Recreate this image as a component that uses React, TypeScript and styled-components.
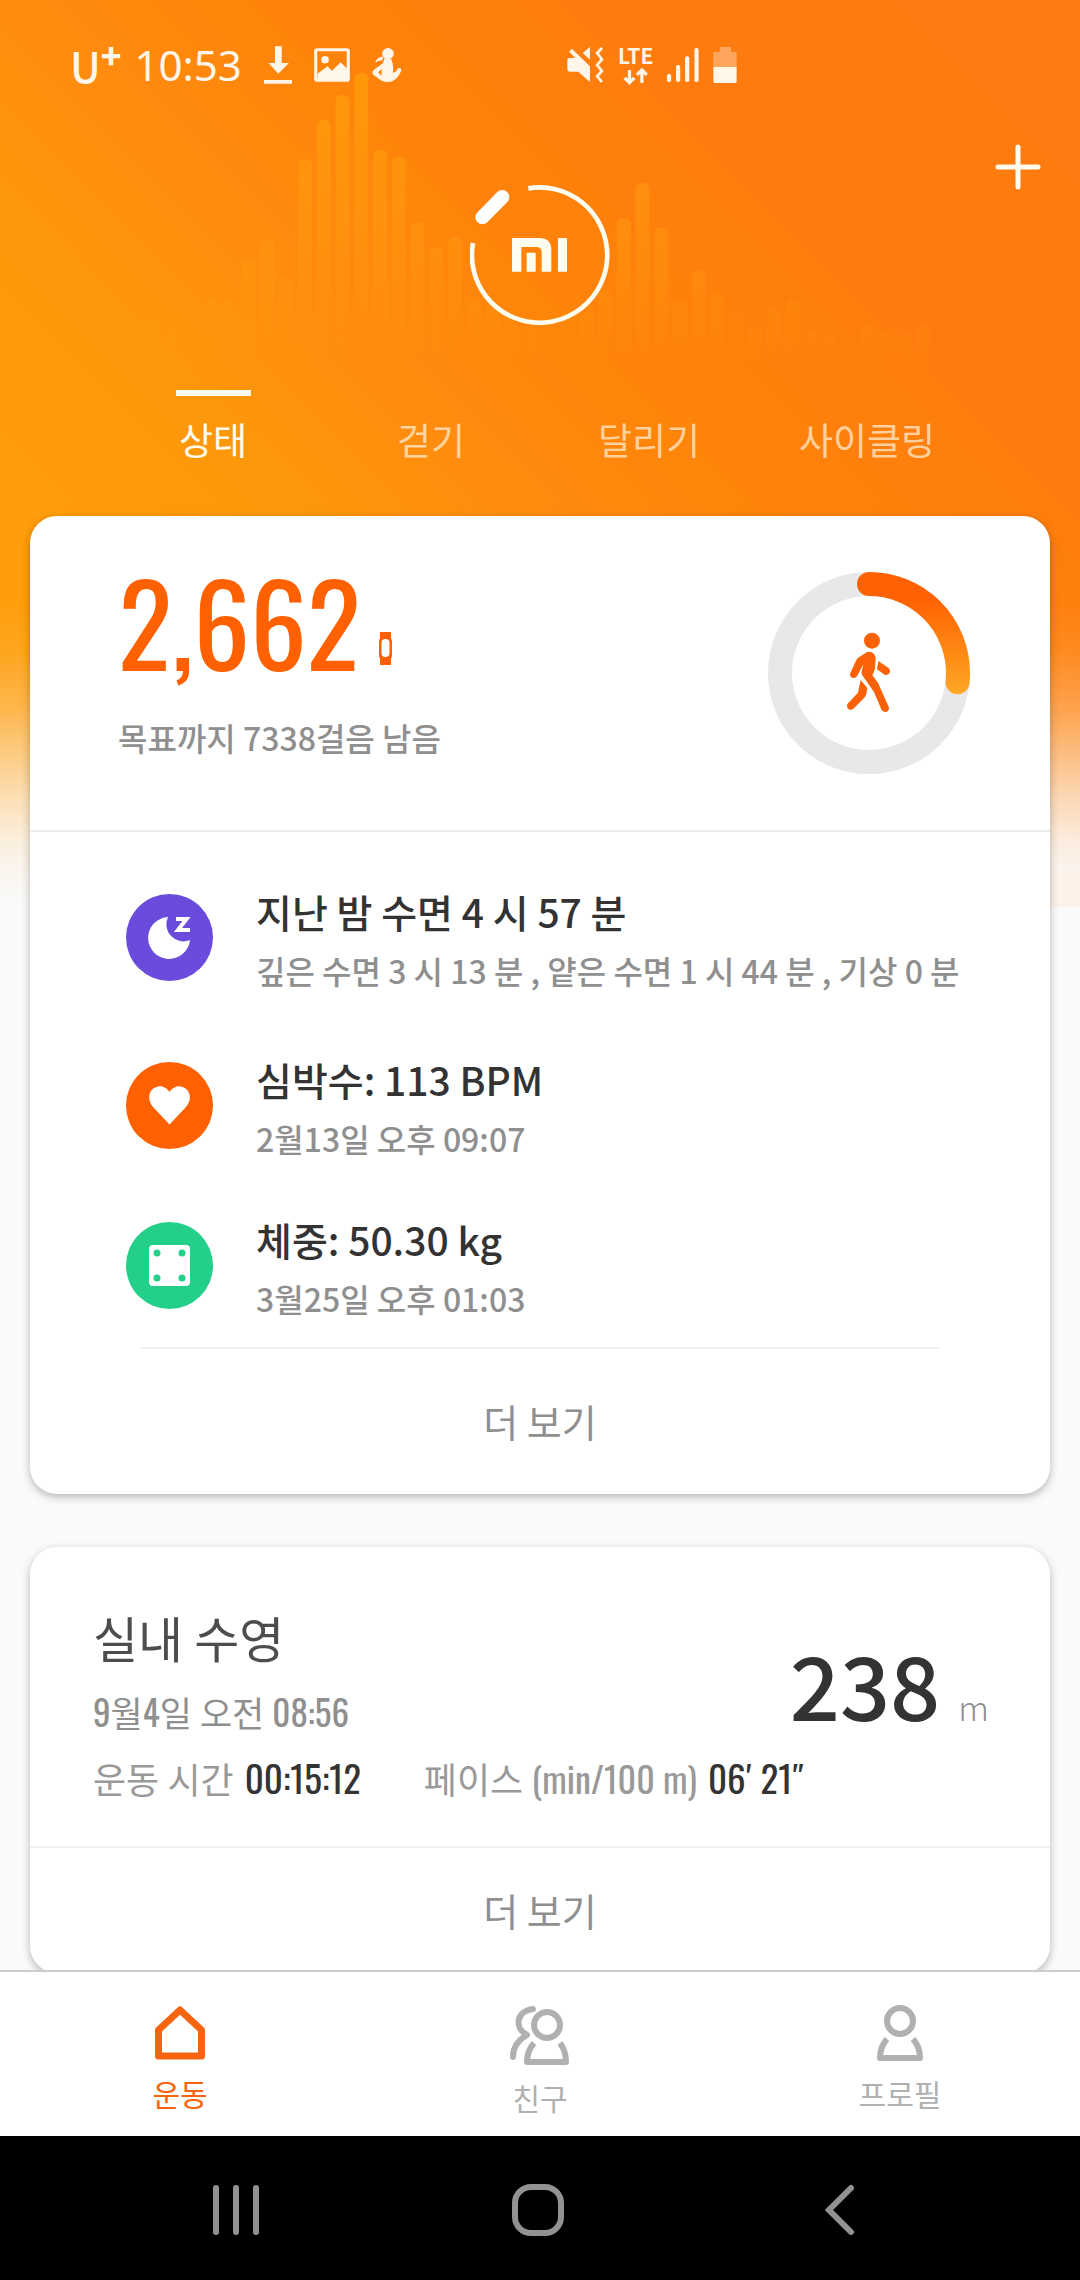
import React, { useState } from "react";
import styled, { createGlobalStyle } from "styled-components";

const sans = '"Noto Sans CJK KR", "Noto Sans", sans-serif';
const narrow = 'Oswald, "Roboto Condensed", "Liberation Sans Narrow", "Noto Sans CJK KR", sans-serif';

const GlobalStyle = createGlobalStyle`
  *, *::before, *::after { box-sizing: border-box; }
  body { margin: 0; background: #fafafa; }
  button { font: inherit; color: inherit; background: none; border: 0; padding: 0; cursor: pointer; }
  h1, h2, h3, p, ul { margin: 0; padding: 0; font-weight: inherit; font-size: inherit; }
  ul { list-style: none; }
  svg { display: block; flex: none; }
`;

const Screen = styled.div`
  height: 100vh;
  display: flex;
  flex-direction: column;
  font-family: ${sans};
  background: #fafafa;
`;

const Scroller = styled.div`
  flex: 1;
  min-height: 0;
  overflow: hidden auto;
  scrollbar-width: none;
  background:
    linear-gradient(#fdf1e8, #fdf1e8) right 871px / 30px 36px no-repeat,
    linear-gradient(180deg, rgba(250, 250, 250, 0) 600px, rgba(250, 250, 250, 0.08) 650px, rgba(250, 250, 250, 0.28) 710px, rgba(250, 250, 250, 0.5) 755px, rgba(250, 250, 250, 0.72) 800px, rgba(250, 250, 250, 0.88) 840px, rgba(250, 250, 250, 0.97) 880px, #fafafa 908px),
    linear-gradient(45deg, #ff9d0c 0%, #ff9d0a 22%, #fd970a 36%, #ff8b0f 47%, #ff840a 58%, #fe7c0e 76%, #fe7a12 100%) 0 0 / 100% 910px no-repeat,
    #fafafa;
`;

const Header = styled.header`
  position: relative;
  color: #fff;
  padding-bottom: 52px;
`;

const Spectrum = styled.svg`
  position: absolute;
  inset: 0 auto auto 0;
`;

const StatusBar = styled.div`
  position: relative;
  display: grid;
  grid-template-columns: 497px auto;
  justify-content: start;
  height: 130px;
  padding: 0 70px;
  color: #fff6ea;
`;

const StatusGroup = styled.div<{ $gap: number }>`
  display: flex;
  align-items: center;
  gap: ${(p) => p.$gap}px;
`;

const Carrier = styled.span`
  display: flex;
  align-items: center;
  font: 500 42px/58px ${sans};
  sup { font: 900 34px/38px ${sans}; align-self: flex-start; }
`;

const Clock = styled.time`
  font: 400 42px/60px "Noto Sans", sans-serif;
`;

const Network = styled.span`
  display: flex;
  flex-direction: column;
  align-items: center;
  gap: 4px;
  font: 700 21px/18px ${sans};
`;

const TitleBar = styled.div`
  position: relative;
  display: grid;
  grid-template-columns: 1fr auto 1fr;
  padding: 0 25px;
`;

const Brand = styled.h1`
  grid-column: 2;
  margin-top: 55px;
`;

const AddButton = styled.button`
  justify-self: end;
  align-self: start;
  height: 74px;
  padding: 0 14px;
`;

const Tabs = styled.nav`
  position: relative;
  display: grid;
  grid-template-columns: repeat(4, 1fr);
  margin: 65px 104px 0;
`;

const Tab = styled.button<{ $active: boolean }>`
  display: flex;
  flex-direction: column;
  align-items: center;
  gap: 18px;
  font-size: 37px;
  line-height: 50px;
  color: ${(p) => (p.$active ? "#fffdf0" : "rgba(255, 240, 215, 0.72)")};
  &::before {
    content: "";
    width: 75px;
    height: 6px;
    background: ${(p) => (p.$active ? "#fffdf0" : "transparent")};
  }
`;

const Cards = styled.main`
  position: relative;
  display: flex;
  flex-direction: column;
  gap: 53px;
  padding: 0 30px 53px;
`;

const Card = styled.section`
  background: #fff;
  border-radius: 27px;
  box-shadow: 0 3px 8px rgba(0, 0, 0, 0.27);
`;

const StepSummary = styled.div`
  display: flex;
  justify-content: space-between;
  align-items: center;
  height: 314px;
  padding: 0 80px 0 88px;
`;

const StepText = styled.div`
  padding-bottom: 27px;
`;

const Steps = styled.p`
  display: flex;
  align-items: flex-end;
  gap: 18px;
  font: 400 113px/120px ${narrow};
  color: #ff6000;
  svg { margin-bottom: 15px; }
`;

const Goal = styled.p`
  margin-top: 35px;
  font-weight: 500;
  font-size: 32px;
  line-height: 44px;
  color: #8f8f8f;
`;

const Metrics = styled.ul`
  padding: 51px 80px 27px 96px;
  border-top: 2px solid #ececec;
`;

const Metric = styled.li<{ $space: number }>`
  display: flex;
  align-items: center;
  gap: 43px;
  margin-bottom: ${(p) => p.$space}px;
`;

const MetricTitle = styled.h2`
  font-weight: 500;
  font-size: 39px;
  line-height: 56px;
  color: #333;
`;

const MetricNote = styled.p`
  margin-top: 11px;
  font-weight: 500;
  font-size: 32px;
  line-height: 40px;
  padding-bottom: 2px;
  color: #8f8f8f;
  white-space: nowrap;
`;

const MoreButton = styled.button<{ $inset: number; $height: number }>`
  display: block;
  width: calc(100% - ${(p) => p.$inset * 2}px);
  height: ${(p) => p.$height}px;
  margin: 0 ${(p) => p.$inset}px;
  padding-bottom: 3px;
  border-top: 2px solid #efefef;
  font-size: 38px;
  color: #8f8f8f;
`;

const Workout = styled.div`
  padding: 58px 61px 44px 63px;
`;

const WorkoutHead = styled.div`
  display: flex;
  justify-content: space-between;
  align-items: flex-end;
`;

const WorkoutTitle = styled.h2`
  font-size: 49px;
  line-height: 64px;
  color: #4d4d4d;
`;

const WorkoutDate = styled.p`
  margin-top: 18px;
  font: 400 35px/48px ${narrow};
  color: #8f8f8f;
`;

const Distance = styled.p`
  display: flex;
  align-items: baseline;
  gap: 18px;
  font: 500 88px/104px ${sans};
  color: #333;
  span { font: 300 34px/48px ${sans}; color: #8f8f8f; }
`;

const Stats = styled.dl`
  display: flex;
  gap: 63px;
  margin: 19px 0 0;
  line-height: 48px;
`;

const Stat = styled.div`
  display: flex;
  gap: 11px;
  dt { font: 400 36px/48px ${narrow}; color: #999; }
  dd { margin: 0; font: 400 37px/48px ${narrow}; color: #333; }
`;

const BottomNav = styled.nav`
  display: grid;
  grid-template-columns: repeat(3, 1fr);
  height: 166px;
  border-top: 2px solid #ccc;
  background: #fff;
`;

const NavItem = styled.button<{ $active: boolean }>`
  display: flex;
  flex-direction: column;
  align-items: center;
  gap: 15px;
  padding-top: 33px;
  font-size: 30px;
  line-height: 34px;
  color: ${(p) => (p.$active ? "#f66410" : "#b0b0b0")};
`;

const SystemBar = styled.div`
  display: flex;
  justify-content: center;
  align-items: center;
  gap: 250px;
  height: 144px;
  padding: 4px 4px 0 0;
  background: #000;
  color: #929292;
`;

const SystemButton = styled.button`
  display: flex;
  justify-content: center;
  width: 52px;
`;

const barTops = [
  317, 318, 315, 300, 300, 260, 240, 277, 159, 120, 95, 73, 150, 157, 222, 247, 237, 300, 305, 312, 318,
  320, 312, 305, 290, 218, 183, 228, 300, 270, 293, 317, 327, 308, 300, 330, 335, 335, 323, 330, 332, 325,
];

const StepBars = () => (
  <Spectrum width="1000" height="400" viewBox="0 0 1000 400" aria-hidden="true">
    <defs>
      <linearGradient id="bars" gradientUnits="userSpaceOnUse" x1="0" y1="70" x2="0" y2="365">
        <stop offset="0" stopColor="#ffa608" stopOpacity="0.6" />
        <stop offset="0.5" stopColor="#ffa010" stopOpacity="0.42" />
        <stop offset="1" stopColor="#ffa010" stopOpacity="0" />
      </linearGradient>
    </defs>
    {barTops.map((top, i) => (
      <rect key={i} x={148 + i * 18.75} y={top} width="14" height={365 - top} rx="6" fill="url(#bars)" />
    ))}
  </Spectrum>
);

const DownloadIcon = () => (
  <svg width="28" height="38" viewBox="773 140 82 112" fill="currentColor">
    <path d="M805 141h20v49h21l-31 32-29-32h19zM773 240h82v11h-82z" />
  </svg>
);

const PhotoIcon = () => (
  <svg width="36" height="34" viewBox="918 142 104 102" fill="currentColor" preserveAspectRatio="none">
    <rect x="923" y="147" width="94" height="92" rx="4" fill="none" stroke="currentColor" strokeWidth="9" />
    <circle cx="950" cy="177" r="11" />
    <path d="M928 219l29-22 13 13 25-25 19 19v34h-86z" />
  </svg>
);

const FitnessIcon = () => (
  <svg width="30" height="34" viewBox="1084 143 88 103" fill="currentColor" preserveAspectRatio="none">
    <circle cx="1131" cy="160" r="17" />
    <path d="M1093 186Q1100 170 1118 169L1114 180Q1104 182 1093 186Z" />
    <path fillRule="evenodd" d="M1120 175H1140Q1149 195 1145 218Q1156 216 1159 205Q1170 201 1170 211Q1162 233 1145 243Q1128 249 1112 242L1087 223Q1082 217 1090 209L1116 189ZM1102 217L1112 228V206Z" />
  </svg>
);

const MuteIcon = () => (
  <svg width="37" height="36" viewBox="80 138 108 108" fill="currentColor" preserveAspectRatio="none">
    <path d="M81 178q0-7 7-7h16L86 152l8-9 53 53v47l-34-31H88q-7 0-7-7zM126 156l21-18v38z" />
    <path d="M182 141l-14 15 14 19-14 17 14 18-14 16 14 17" fill="none" stroke="currentColor" strokeWidth="8" />
  </svg>
);

const DataIcon = () => (
  <svg width="26" height="17" viewBox="246 202 76 52" fill="none" stroke="currentColor" strokeWidth="10">
    <path d="M264 208v40M249 232l15 15 15-15M302 248v-39M287 223l15-15 15 15" />
  </svg>
);

const SignalIcon = () => (
  <svg width="32" height="34" viewBox="370 144 92 102" fill="currentColor" preserveAspectRatio="none">
    <rect x="370" y="222" width="12" height="24" rx="5" />
    <rect x="396" y="195" width="12" height="51" rx="5" />
    <rect x="422" y="169" width="12" height="77" rx="5" />
    <rect x="449" y="144" width="12" height="102" rx="5" />
  </svg>
);

const BatteryIcon = () => (
  <svg width="24" height="36" viewBox="505 138 70 108" fill="currentColor">
    <path d="M524 138h34v15h17v45h-70v-45h19z" opacity="0.35" />
    <path d="M505 198h70v43q0 5-5 5h-60q-5 0-5-5z" />
  </svg>
);

const PlusIcon = () => (
  <svg width="46" height="46" viewBox="0 0 46 46" fill="none" stroke="#fffdf0" strokeWidth="5" strokeLinecap="round">
    <path d="M23 3v40M3 23h40" />
  </svg>
);

const BrandLogo = () => (
  <svg width="140" height="140" viewBox="90 75 420 420" role="img" aria-label="Mi" fill="#fffdf0">
    <path d="M265 85A203 203 0 1 1 99 249" fill="none" stroke="#fffdf0" strokeWidth="14" />
    <path d="M127 172L187 111" stroke="#fff" strokeWidth="42" strokeLinecap="round" />
    <path d="M216 335V234H298Q334 234 334 270V335H305V277Q305 261 289 261H244V335Z" />
    <path d="M260 278h27v57h-27zM354 234h27v101h-27z" />
  </svg>
);

const BandIcon = () => (
  <svg width="13" height="33" viewBox="0 0 13 33" fill="#ff6000">
    <path fillRule="evenodd" d="M1 0h11v6l1 3v15l-1 3v6H1v-6l-1-3V9l1-3zM6.500 7q-4 0-4 4v10q0 4 4 4t4-4V11q0-4-4-4z" />
  </svg>
);

const RADIUS = 89;

const GoalRing = ({ steps, goal }: { steps: number; goal: number }) => {
  const length = 2 * Math.PI * RADIUS;
  return (
    <svg width="202" height="202" viewBox="0 0 202 202" role="img" aria-label={`${steps} / ${goal}`}>
      <defs>
        <linearGradient id="ring" gradientUnits="userSpaceOnUse" x1="0" y1="25" x2="0" y2="122">
          <stop offset="0" stopColor="#ff6000" />
          <stop offset="1" stopColor="#ffa826" />
        </linearGradient>
      </defs>
      <circle cx="101" cy="101" r={RADIUS} fill="none" stroke="#e8e8e8" strokeWidth="24" />
      <path
        d="M101 12A89 89 0 0 1 101 190A89 89 0 0 1 101 12"
        fill="none"
        stroke="url(#ring)"
        strokeWidth="24"
        strokeLinecap="round"
        strokeDasharray={`${(length * steps) / goal} ${length}`}
      />
      <g transform="translate(-28 -32) scale(0.3333)" fill="#fb6208">
        <circle cx="396" cy="302" r="24" />
        <path d="M388 335C400 337 408 345 407 358L405 385Q403 396 397 406L414 428L446 500Q450 512 438 516Q428 518 424 508L402 456L366 404Q364 398 366 390L370 372L352 407Q346 416 336 413Q328 408 331 399L348 362Q351 355 358 351L380 337Q384 335 388 335Z" />
        <path d="M415 363L446 384Q453 392 448 400Q442 407 434 404L411 388Z" />
        <path d="M362 420L382 444L379 462Q378 468 373 473L340 506Q332 512 324 506Q318 498 324 490L354 458Z" />
      </g>
    </svg>
  );
};

const SleepIcon = () => (
  <svg width="87" height="87" viewBox="0 0 87 87" fill="#fff">
    <circle cx="43.500" cy="43.500" r="43.500" fill="#6a4bdb" />
    <path d="M42 23A21 21 0 1 0 64 46A17 17 0 0 1 42 23Z" />
    <path d="M50 25H60.500L52 36H64" fill="none" stroke="#fff" strokeWidth="4" />
  </svg>
);

const HeartIcon = () => (
  <svg width="87" height="87" viewBox="0 0 87 87" fill="#fff">
    <circle cx="43.500" cy="43.500" r="43.500" fill="#ff6000" />
    <path d="M43.500 62.500L27 45C21 38 22 28 30 25C36 23 41 26 43.500 30C46 26 51 23 57 25C65 28 66 38 60 45Z" />
  </svg>
);

const ScaleIcon = () => (
  <svg width="87" height="87" viewBox="0 0 87 87" fill="#24cf89">
    <circle cx="43.500" cy="43.500" r="43.500" />
    <rect x="23" y="23" width="41" height="41" rx="4" fill="#fff" />
    <circle cx="31" cy="31" r="3.500" />
    <circle cx="56" cy="31" r="3.500" />
    <circle cx="31" cy="56" r="3.500" />
    <circle cx="56" cy="56" r="3.500" />
  </svg>
);

const HomeIcon = () => (
  <svg width="52" height="56" viewBox="0 0 52 56" fill="none" stroke="currentColor" strokeWidth="7" strokeLinejoin="round">
    <path d="M4.500 25L26 5L47.500 25V51H4.500Z" />
  </svg>
);

const FriendsIcon = () => (
  <svg width="60" height="60" viewBox="0 0 60 60" fill="none" stroke="currentColor" strokeWidth="6" strokeLinejoin="round">
    <circle cx="37" cy="20" r="13" />
    <path d="M24 38Q17 46 17 57H56Q56 46 50 38" />
    <path d="M23 4C6 6 4 23 17 30C8 35 3 43 3 52" strokeLinecap="round" />
  </svg>
);

const ProfileIcon = () => (
  <svg width="46" height="56" viewBox="0 0 46 56" fill="none" stroke="currentColor" strokeWidth="6" strokeLinejoin="round">
    <circle cx="23" cy="16" r="13" />
    <path d="M10 34Q3 42 3 53H43Q43 42 36 34" />
  </svg>
);

const tabs = ["상태", "걷기", "달리기", "사이클링"];

const metrics = [
  { icon: <SleepIcon />, title: "지난 밤 수면 4 시 57 분", note: "깊은 수면 3 시 13 분 , 얕은 수면 1 시 44 분 , 기상 0 분", space: 59 },
  { icon: <HeartIcon />, title: "심박수: 113 BPM", note: "2월13일 오후 09:07", space: 51 },
  { icon: <ScaleIcon />, title: "체중: 50.30 kg", note: "3월25일 오후 01:03", space: 0 },
];

const navItems = [
  { icon: <HomeIcon />, label: "운동" },
  { icon: <FriendsIcon />, label: "친구" },
  { icon: <ProfileIcon />, label: "프로필" },
];

export default function App() {
  const [tab, setTab] = useState(0);
  const [page, setPage] = useState(0);

  return (
    <Screen>
      <GlobalStyle />
      <Scroller>
        <Header>
          <StepBars />
          <StatusBar>
            <StatusGroup $gap={22}>
              <StatusGroup $gap={13}>
                <Carrier>U<sup>+</sup></Carrier>
                <Clock>10:53</Clock>
              </StatusGroup>
              <DownloadIcon />
              <PhotoIcon />
              <FitnessIcon />
            </StatusGroup>
            <StatusGroup $gap={14}>
              <MuteIcon />
              <Network>LTE<DataIcon /></Network>
              <SignalIcon />
              <BatteryIcon />
            </StatusGroup>
          </StatusBar>
          <TitleBar>
            <Brand><BrandLogo /></Brand>
            <AddButton aria-label="추가"><PlusIcon /></AddButton>
          </TitleBar>
          <Tabs>
            {tabs.map((label, i) => (
              <Tab key={label} $active={i === tab} onClick={() => setTab(i)}>{label}</Tab>
            ))}
          </Tabs>
        </Header>
        <Cards>
          <Card>
            <StepSummary>
              <StepText>
                <Steps>2,662<BandIcon /></Steps>
                <Goal>목표까지 7338걸음 남음</Goal>
              </StepText>
              <GoalRing steps={2662} goal={10000} />
            </StepSummary>
            <Metrics>
              {metrics.map((m) => (
                <Metric key={m.title} $space={m.space}>
                  {m.icon}
                  <div>
                    <MetricTitle>{m.title}</MetricTitle>
                    <MetricNote>{m.note}</MetricNote>
                  </div>
                </Metric>
              ))}
            </Metrics>
            <MoreButton $inset={110} $height={147}>더 보기</MoreButton>
          </Card>
          <Card>
            <Workout>
              <WorkoutHead>
                <div>
                  <WorkoutTitle>실내 수영</WorkoutTitle>
                  <WorkoutDate>9월4일 오전 08:56</WorkoutDate>
                </div>
                <Distance>238<span>m</span></Distance>
              </WorkoutHead>
              <Stats>
                <Stat><dt>운동 시간</dt><dd>00:15:12</dd></Stat>
                <Stat><dt>페이스 (min/100 m)</dt><dd>06′ 21″</dd></Stat>
              </Stats>
            </Workout>
            <MoreButton $inset={0} $height={127}>더 보기</MoreButton>
          </Card>
        </Cards>
      </Scroller>
      <BottomNav>
        {navItems.map((item, i) => (
          <NavItem key={item.label} $active={i === page} onClick={() => setPage(i)}>
            {item.icon}
            {item.label}
          </NavItem>
        ))}
      </BottomNav>
      <SystemBar>
        <SystemButton aria-label="최근 앱">
          <svg width="46" height="52" viewBox="0 0 46 52" stroke="currentColor" strokeWidth="6" strokeLinecap="round">
            <path d="M3 4v44M23 4v44M43 4v44" />
          </svg>
        </SystemButton>
        <SystemButton aria-label="홈">
          <svg width="52" height="52" viewBox="0 0 52 52" fill="none" stroke="currentColor" strokeWidth="6">
            <rect x="3" y="3" width="46" height="46" rx="16" />
          </svg>
        </SystemButton>
        <SystemButton aria-label="뒤로">
          <svg width="30" height="52" viewBox="0 0 30 52" fill="none" stroke="currentColor" strokeWidth="6" strokeLinecap="round">
            <path d="M26 4L4 26L26 48" />
          </svg>
        </SystemButton>
      </SystemBar>
    </Screen>
  );
}
